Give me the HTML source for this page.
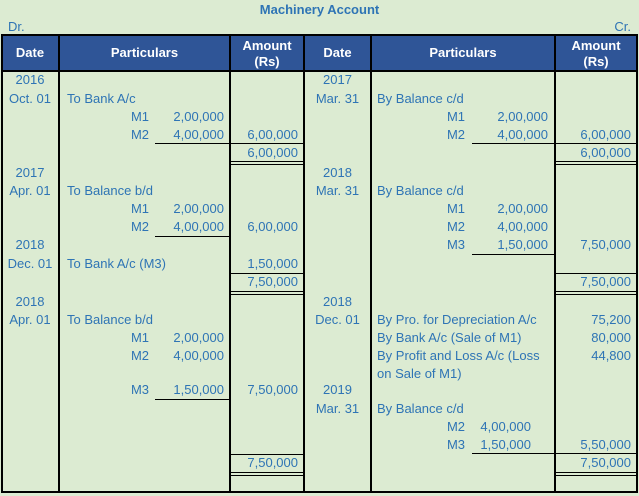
<!DOCTYPE html>
<html><head><meta charset="utf-8"><style>
body{margin:0;width:639px;height:496px;background:#dcebd2;font-family:"Liberation Sans",sans-serif;font-size:13px;color:#2e74b5;position:relative;overflow:hidden}
.t{position:absolute;white-space:nowrap;line-height:16px;transform:translateY(-8px)}
.r{text-align:right}
.c{text-align:center}
.h{position:absolute;background:#000;height:1px}
.v{position:absolute;background:#000;width:2px;top:35px;height:457px}
.hd{position:absolute;top:35px;height:36px;background:#2f5597;left:1px;width:636px}
.ht{position:absolute;color:#fff;font-weight:bold;text-align:center;line-height:16px}
</style></head><body>
<div class="t" style="left:0;width:639px;top:10px;text-align:center;font-weight:bold">Machinery Account</div>
<div class="t" style="left:8px;top:27px">Dr.</div>
<div class="t" style="right:8px;top:27px">Cr.</div>
<div class="hd"></div>
<div class="ht" style="left:1px;width:58px;top:45px">Date</div>
<div class="ht" style="left:59px;width:171px;top:45px">Particulars</div>
<div class="ht" style="left:230px;width:74px;top:38px">Amount<br>(Rs)</div>
<div class="ht" style="left:304px;width:67px;top:45px">Date</div>
<div class="ht" style="left:371px;width:184px;top:45px">Particulars</div>
<div class="ht" style="left:555px;width:82px;top:38px">Amount<br>(Rs)</div>
<div class="h" style="left:1px;width:637px;top:34px;height:2px"></div>
<div class="h" style="left:1px;width:637px;top:70px;height:2px"></div>
<div class="h" style="left:1px;width:637px;top:491px;height:2px"></div>
<div class="v" style="left:1px"></div><div class="v" style="left:58px"></div><div class="v" style="left:229px"></div><div class="v" style="left:303px"></div><div class="v" style="left:370px"></div><div class="v" style="left:554px"></div><div class="v" style="left:636px"></div>

<div class="t c" style="left:1px;width:58px;top:80px">2016</div>
<div class="t c" style="left:1px;width:58px;top:99px">Oct. 01</div>
<div class="t c" style="left:1px;width:58px;top:173px">2017</div>
<div class="t c" style="left:1px;width:58px;top:191px">Apr. 01</div>
<div class="t c" style="left:1px;width:58px;top:245px">2018</div>
<div class="t c" style="left:1px;width:58px;top:264px">Dec. 01</div>
<div class="t c" style="left:1px;width:58px;top:302px">2018</div>
<div class="t c" style="left:1px;width:58px;top:320px">Apr. 01</div>
<div class="t" style="left:67px;top:99px">To Bank A/c</div>
<div class="t" style="left:67px;top:191px">To Balance b/d</div>
<div class="t" style="left:67px;top:264px">To Bank A/c (M3)</div>
<div class="t" style="left:67px;top:320px">To Balance b/d</div>
<div class="t r" style="right:490px;top:117px">M1</div><div class="t r" style="right:415px;top:117px">2,00,000</div>
<div class="t r" style="right:490px;top:135px">M2</div><div class="t r" style="right:415px;top:135px">4,00,000</div><div class="t r" style="right:341px;top:135px">6,00,000</div>
<div class="t r" style="right:341px;top:153px">6,00,000</div>
<div class="t r" style="right:490px;top:209px">M1</div><div class="t r" style="right:415px;top:209px">2,00,000</div>
<div class="t r" style="right:490px;top:227px">M2</div><div class="t r" style="right:415px;top:227px">4,00,000</div><div class="t r" style="right:341px;top:227px">6,00,000</div>
<div class="t r" style="right:341px;top:264px">1,50,000</div>
<div class="t r" style="right:341px;top:282px">7,50,000</div>
<div class="t r" style="right:490px;top:338px">M1</div><div class="t r" style="right:415px;top:338px">2,00,000</div>
<div class="t r" style="right:490px;top:356px">M2</div><div class="t r" style="right:415px;top:356px">4,00,000</div>
<div class="t r" style="right:490px;top:390px">M3</div><div class="t r" style="right:415px;top:390px">1,50,000</div><div class="t r" style="right:341px;top:390px">7,50,000</div>
<div class="t r" style="right:341px;top:463px">7,50,000</div>
<div class="h" style="left:155px;width:149px;top:143px"></div>
<div class="h" style="left:230px;width:74px;top:161px"></div><div class="h" style="left:230px;width:74px;top:164px"></div>
<div class="h" style="left:155px;width:75px;top:236px"></div>
<div class="h" style="left:230px;width:74px;top:273px"></div>
<div class="h" style="left:230px;width:74px;top:291px"></div><div class="h" style="left:230px;width:74px;top:294px"></div>
<div class="h" style="left:155px;width:75px;top:399px"></div>
<div class="h" style="left:230px;width:74px;top:454px"></div>
<div class="h" style="left:230px;width:74px;top:472px"></div><div class="h" style="left:230px;width:74px;top:475px"></div>

<div class="t c" style="left:304px;width:67px;top:80px">2017</div>
<div class="t c" style="left:304px;width:67px;top:99px">Mar. 31</div>
<div class="t c" style="left:304px;width:67px;top:173px">2018</div>
<div class="t c" style="left:304px;width:67px;top:191px">Mar. 31</div>
<div class="t c" style="left:304px;width:67px;top:302px">2018</div>
<div class="t c" style="left:304px;width:67px;top:320px">Dec. 01</div>
<div class="t c" style="left:304px;width:67px;top:390px">2019</div>
<div class="t c" style="left:304px;width:67px;top:409px">Mar. 31</div>
<div class="t" style="left:377px;top:99px">By Balance c/d</div>
<div class="t r" style="right:174px;top:117px">M1</div><div class="t r" style="right:91px;top:117px">2,00,000</div>
<div class="t r" style="right:174px;top:135px">M2</div><div class="t r" style="right:91px;top:135px">4,00,000</div><div class="t r" style="right:8px;top:135px">6,00,000</div>
<div class="t r" style="right:8px;top:153px">6,00,000</div>
<div class="t" style="left:377px;top:191px">By Balance c/d</div>
<div class="t r" style="right:174px;top:209px">M1</div><div class="t r" style="right:91px;top:209px">2,00,000</div>
<div class="t r" style="right:174px;top:227px">M2</div><div class="t r" style="right:91px;top:227px">4,00,000</div>
<div class="t r" style="right:174px;top:245px">M3</div><div class="t r" style="right:91px;top:245px">1,50,000</div><div class="t r" style="right:8px;top:245px">7,50,000</div>
<div class="t r" style="right:8px;top:282px">7,50,000</div>
<div class="t" style="left:377px;top:320px">By Pro. for Depreciation A/c</div><div class="t r" style="right:8px;top:320px">75,200</div>
<div class="t" style="left:377px;top:338px">By Bank A/c (Sale of M1)</div><div class="t r" style="right:8px;top:338px">80,000</div>
<div class="t" style="left:377px;top:356px">By Profit and Loss A/c (Loss</div><div class="t r" style="right:8px;top:356px">44,800</div>
<div class="t" style="left:377px;top:374px">on Sale of M1)</div>
<div class="t" style="left:377px;top:409px">By Balance c/d</div>
<div class="t r" style="right:174px;top:427px">M2</div><div class="t r" style="right:108px;top:427px">4,00,000</div>
<div class="t r" style="right:174px;top:445px">M3</div><div class="t r" style="right:108px;top:445px">1,50,000</div><div class="t r" style="right:8px;top:445px">5,50,000</div>
<div class="t r" style="right:8px;top:463px">7,50,000</div>
<div class="h" style="left:472px;width:165px;top:143px"></div>
<div class="h" style="left:555px;width:82px;top:161px"></div><div class="h" style="left:555px;width:82px;top:164px"></div>
<div class="h" style="left:472px;width:83px;top:254px"></div>
<div class="h" style="left:555px;width:82px;top:273px"></div>
<div class="h" style="left:555px;width:82px;top:291px"></div><div class="h" style="left:555px;width:82px;top:294px"></div>
<div class="h" style="left:472px;width:165px;top:453px"></div>
<div class="h" style="left:555px;width:82px;top:472px"></div><div class="h" style="left:555px;width:82px;top:475px"></div>
</body></html>
